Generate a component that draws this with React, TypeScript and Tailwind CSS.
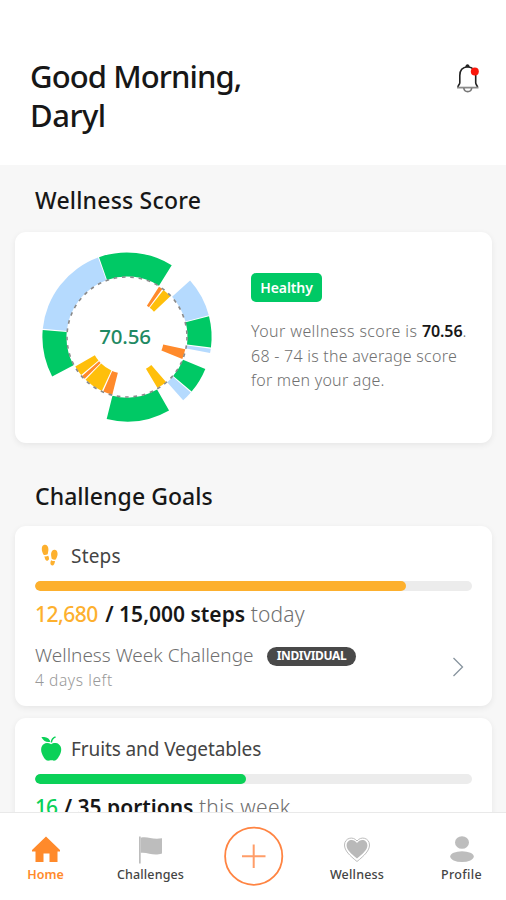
import { ReactNode } from "react";

type Segment = {
  from: number;
  to: number;
  color: string;
};

const GREEN = "#00c965";
const BLUE = "#b5dafe";
const ORANGE = "#ff8a2b";
const YELLOW = "#ffbf0b";

const outerSegments: Segment[] = [
  { from: -19.3, to: 31.9, color: GREEN },
  { from: 48.2, to: 75.1, color: BLUE },
  { from: 75.8, to: 97.2, color: GREEN },
  { from: 98, to: 100.9, color: BLUE },
  { from: 112.2, to: 130.2, color: GREEN },
  { from: 131, to: 138.4, color: BLUE },
  { from: 150.2, to: 193.9, color: GREEN },
  { from: 242.2, to: 274.8, color: GREEN },
  { from: 275.6, to: 340, color: BLUE },
];

const innerSegments: Segment[] = [
  { from: 32.5, to: 36.4, color: ORANGE },
  { from: 37.8, to: 46.8, color: YELLOW },
  { from: 101.8, to: 111.6, color: ORANGE },
  { from: 139, to: 149.2, color: YELLOW },
  { from: 194.3, to: 203.6, color: ORANGE },
  { from: 205, to: 224.2, color: YELLOW },
  { from: 225.4, to: 229, color: ORANGE },
  { from: 230.4, to: 240.4, color: YELLOW },
];

const point = (radius: number, angle: number) => {
  const rad = (angle * Math.PI) / 180;
  return `${(radius * Math.sin(rad)).toFixed(2)} ${(-radius * Math.cos(rad)).toFixed(2)}`;
};

const arcPath = (inner: number, outer: number, { from, to }: Segment) =>
  `M${point(outer, from)}A${outer} ${outer} 0 0 1 ${point(outer, to)}L${point(inner, to)}A${inner} ${inner} 0 0 0 ${point(inner, from)}Z`;

const ScoreChart = () => {
  return (
    <svg width="172" height="172" viewBox="-86 -86 172 172" className="block">
      {outerSegments.map((segment) => (
        <path key={segment.from} d={arcPath(60.5, 84.6, segment)} fill={segment.color} />
      ))}
      {innerSegments.map((segment) => (
        <path key={segment.from} d={arcPath(37, 59.5, segment)} fill={segment.color} />
      ))}
      <circle
        r="60"
        fill="none"
        stroke="#8a8a8a"
        strokeWidth="1.6"
        strokeDasharray="3.6 4.8"
      />
    </svg>
  );
};

type CardProps = {
  className: string;
  children: ReactNode;
};

const Card = ({ className, children }: CardProps) => {
  return (
    <div
      className={`ml-[15px] w-[477px] shrink-0 rounded-[11px] bg-white shadow-[0_2px_6px_rgba(0,0,0,0.07)] ${className}`}
    >
      {children}
    </div>
  );
};

type GoalProps = {
  icon: ReactNode;
  title: ReactNode;
  percent: number;
  barClass: string;
};

const GoalHeader = ({ icon, title, percent, barClass }: GoalProps) => {
  return (
    <>
      <div className="flex h-[30px] items-center">
        <div className="w-[36px] pl-1">{icon}</div>
        {title}
      </div>
      <div className="mt-[10px] h-[10px] w-[437px] overflow-hidden rounded-full bg-[#ececec]">
        <div
          className={`h-full rounded-full ${barClass}`}
          style={{ width: `${percent}%` }}
        />
      </div>
    </>
  );
};

const StepsIcon = () => (
  <svg width="24" height="24" viewBox="0 0 24 24" fill="#fdb02e">
    <path d="M5.400.8C7.700.4 9.300 2.300 9.400 5c.1 2.200-.5 3.600-.7 5.300-1.400.7-2.900.9-4.100.5C3.700 8.900 2.800 7.200 2.800 4.900 2.800 2.700 3.700 1.100 5.400.8Z" />
    <path d="M5.500 12.300c1.100.3 2.500 0 3.700-.6.9 1.700 1.400 4-.3 4.900-1.800.9-3.200-1.300-3.400-4.300Z" />
    <path d="M15.900 5.800c1.800.2 2.700 2 2.700 4.200-.1 2.300-1 3.700-1.800 5.600-1.500.2-3-.1-4.100-.8-.2-1.700-.8-3.100-.6-5.200.3-2.600 1.800-4 3.800-3.800Z" />
    <path d="M12.100 16.200c1.200.7 2.700 1 3.900.8-.2 3-1.600 5.100-3.400 4.300-1.700-.8-1.400-3.200-.5-5.100Z" />
  </svg>
);

const AppleIcon = () => (
  <svg width="24" height="26" viewBox="0 0 24 26" fill="#0bd158">
    <path d="M12.100 8.200c2-1.300 5.400-1.700 7.600 0 3.100 2.200 3.100 6.600 1.400 10-1.500 3.200-3.600 6.500-6.100 6.500-1.200 0-1.700-.4-2.900-.4s-1.800.4-2.900.4c-2.500 0-4.700-3.300-6-6.500-1.600-3.600-1.500-8 1.400-10 2.300-1.700 5.100-1.300 7.500 0Z" />
    <path d="M2.400 1.100c3.400-.3 7.600.2 9 4.700C7.800 6.800 3.900 5 2.400 1.100Z" />
    <path d="M16.900 1.500c-2.500 1-3.500 2.400-3.800 5h-1.400c.2-3.200 1.700-5.300 4.500-6.200Z" />
  </svg>
);

const BellIcon = () => (
  <svg width="28" height="32" viewBox="0 0 28 32" fill="none">
    <path
      d="M13.500 3.800c-5 .5-7.700 4-7.700 8.700v7.200c0 1.800-1.700 2.400-1.900 4.500M13.500 3.800c5.300.5 8.200 4 8.200 8.700v7.200c0 1.800 1.500 2.500 1.800 4.500"
      stroke="#222"
      strokeWidth="1.6"
    />
    <path d="M3 24.600h21.500" stroke="#8a8a8a" strokeWidth="1.8" />
    <path d="M9.800 25c.6 4.800 7.300 4.800 7.900 0" stroke="#777" strokeWidth="1.6" />
    <path d="M11.300 4.300c0-4 4.400-4 4.400 0Z" fill="#222" />
    <circle cx="20.800" cy="8.500" r="4" fill="#fa170b" />
  </svg>
);

const App = () => {
  return (
    <div className="flex h-[900px] w-[506px] flex-col overflow-hidden bg-[#f7f7f7] font-['Noto_Sans',sans-serif] text-[#171717]">
      <header className="flex h-[165px] shrink-0 justify-between bg-white pt-[57px] pr-[24px] pl-[30px]">
        <h1 className="text-[31px] leading-[39px] font-medium tracking-[-0.9px]">
          Good Morning,
          <br />
          <span className="tracking-[-0.5px]">Daryl</span>
        </h1>
        <div className="pt-[6px]">
          <BellIcon />
        </div>
      </header>

      <main className="flex min-h-0 flex-1 flex-col overflow-hidden">
        <h2 className="mt-[19px] ml-[35px] h-[32px] shrink-0 text-[23px] leading-[32px] font-medium tracking-[0.2px]">
          Wellness Score
        </h2>
        <Card className="mt-[16px] flex h-[211px]">
          <div className="mt-[19px] ml-[25.5px] grid shrink-0 place-items-center self-start">
            <div className="col-start-1 row-start-1">
              <ScoreChart />
            </div>
            <span className="col-start-1 row-start-1 -mt-[2px] -ml-[3px] text-[20.5px] leading-[24px] font-medium tracking-[-0.2px] text-[#1f8a63]">
              70.56
            </span>
          </div>
          <div className="mt-[41px] ml-[38.5px]">
            <div className="flex h-[29px] w-[71px] items-center justify-center rounded-[5px] bg-[#00c965] pb-[1px] text-[14px] font-semibold tracking-[-0.1px] text-white">
              Healthy
            </div>
            <p className="mt-[17px] text-[16px] leading-[24.5px] font-light tracking-[0.4px] whitespace-nowrap text-[#707070]">
              Your wellness score is{" "}
              <span className="font-semibold tracking-[-0.1px] text-[#171717]">70.56</span>.
              <br />
              <span className="tracking-[0.25px]">68 - 74 is the average score</span>
              <br />
              <span className="tracking-[0.25px]">for men your age.</span>
            </p>
          </div>
        </Card>

        <h2 className="mt-[37px] ml-[35px] h-[32px] shrink-0 text-[23px] leading-[32px] font-medium tracking-[0.05px]">
          Challenge Goals
        </h2>
        <Card className="mt-[14px] h-[180px] px-[20px] pt-[15px]">
          <GoalHeader
            icon={<StepsIcon />}
            title={<span className="text-[19px] tracking-[0.2px] text-[#444]">Steps</span>}
            percent={85}
            barClass="bg-[#fdb02e]"
          />
          <p className="mt-[8px] text-[21px] leading-[30px] font-light whitespace-nowrap text-[#707070]">
            <span className="font-medium tracking-[-0.5px] text-[#fdb02e]">12,680</span>
            <span className="ml-[2px] font-semibold text-[#171717]">
              {" "}
              / 15,000 steps
            </span>{" "}
            <span className="tracking-[0.2px]">today</span>
          </p>
          <div className="flex justify-between">
            <div className="mt-[13px]">
              <div className="flex h-[26px] items-center">
                <span className="w-[232px] text-[19px] font-light whitespace-nowrap text-[#707070]">
                  Wellness Week Challenge
                </span>
                <span className="mt-[2px] flex h-[19px] w-[89px] items-center justify-center rounded-full bg-[#494949] text-[12px] font-bold tracking-[-0.35px] text-white">
                  INDIVIDUAL
                </span>
              </div>
              <p className="text-[15.5px] leading-[24px] font-light tracking-[0.6px] text-[#999]">
                4 days left
              </p>
            </div>
            <svg width="14" height="22" viewBox="0 0 14 22" className="mt-[27px] mr-[7px]">
              <path d="M2.5 2 11.5 11 2.5 20" fill="none" stroke="#87949e" strokeWidth="1.3" />
            </svg>
          </div>
        </Card>

        <Card className="mt-[12px] h-[180px] px-[20px] pt-[16px]">
          <GoalHeader
            icon={<AppleIcon />}
            title={
              <span className="text-[19px] tracking-[-0.1px] text-[#444]">
                Fruits and Vegetables
              </span>
            }
            percent={48.3}
            barClass="bg-[#0bd158]"
          />
          <p className="mt-[8px] text-[21px] leading-[30px] font-light whitespace-nowrap text-[#707070]">
            <span className="font-medium tracking-[-0.9px] text-[#0bd158]">16</span>
            <span className="ml-[1px] font-semibold text-[#171717]">
              {" "}
              / 35 portions
            </span>{" "}
            <span className="tracking-[0.3px]">this week</span>
          </p>
        </Card>
      </main>

      <nav className="flex h-[88px] shrink-0 border-t border-[#e9e9e9] bg-white text-[12.5px] leading-[18px] font-medium text-[#444]">
        <div className="flex w-[91px] flex-col items-center pt-[23px] text-[#ff8a2b]">
          <svg width="30" height="28" viewBox="0 0 30 28" fill="#ff8a2b">
            <path d="M15 .5 29 14v1.500h-2.500V26h-8v-8.500h-6V26h-8V15.500H1V14Z" />
          </svg>
          <span className="mt-[2px] font-semibold">Home</span>
        </div>
        <div className="flex w-[119px] flex-col items-center pt-[23px]">
          <svg width="28" height="30" viewBox="0 0 28 30" fill="#bdbdbd">
            <path d="M2 .5h1.700v27H2Z" />
            <path d="M3.700 1.700c7-2 11 2.500 21.300.6V17.500c-9 3-13.500-1.500-21.300-.7Z" />
          </svg>
          <span className="tracking-[0.15px]">Challenges</span>
        </div>
        <div className="flex w-[87px] flex-col items-center pt-[13px]">
          <svg width="60" height="60" viewBox="0 0 60 60" fill="none" stroke="#ff8442">
            <circle cx="29.7" cy="30.2" r="28.6" strokeWidth="1.8" />
            <path d="M29.7 18.500v23.500M18 30.300h23.500" strokeWidth="2" opacity="0.8" />
          </svg>
        </div>
        <div className="flex w-[120px] flex-col items-center pt-[23px]">
          <svg width="28" height="28" viewBox="0 0 28 28">
            <path
              d="M14 25.500C6.500 19.500 1.500 14.500 1.500 9c0-7 8.500-9.300 12.500-4C18-.3 26.500 2 26.500 9c0 5.500-5 10.500-12.500 16.500Z"
              fill="#fff"
              stroke="#bdbdbd"
              strokeWidth="1"
            />
            <path
              d="M14 22.500C8.200 17.500 3.600 13.800 3.600 9.400c0-5.800 7-7.500 10.400-2.300 3.400-5.200 10.400-3.500 10.400 2.300 0 4.400-4.600 8.100-10.400 13.100Z"
              fill="#b9b9b9"
            />
          </svg>
          <span className="mt-[2px] tracking-[0.2px]">Wellness</span>
        </div>
        <div className="flex w-[89px] flex-col items-center pt-[23px]">
          <svg width="26" height="28" viewBox="0 0 26 28" fill="#bdbdbd">
            <ellipse cx="13" cy="6.500" rx="7" ry="6.300" />
            <ellipse cx="13" cy="20.600" rx="11.800" ry="5.400" />
          </svg>
          <span className="mt-[2px] tracking-[0.3px]">Profile</span>
        </div>
      </nav>
    </div>
  );
};

export default App;
